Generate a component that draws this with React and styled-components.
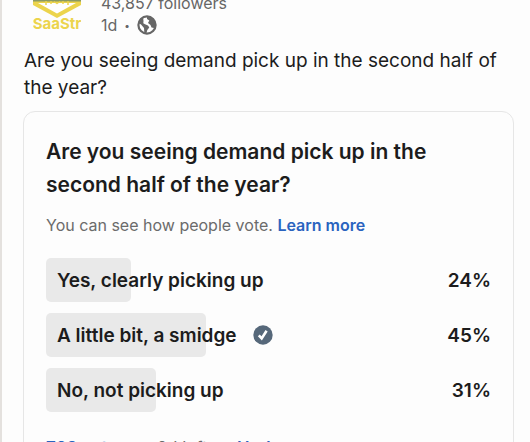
import React from "react";
import styled, { createGlobalStyle } from "styled-components";

const options = [
  { label: "Yes, clearly picking up", percent: 24 },
  { label: "A little bit, a smidge", percent: 45, voted: true },
  { label: "No, not picking up", percent: 31 },
];

const Logo = () => (
  <LogoSvg viewBox="0 0 48 36" aria-label="SaaStr">
    <path d="M0 0H48V5L24 18L0 5Z" fill="#ecd44c" />
    <path d="M5 3H43L24 13.5Z" fill="#fff" />
    <rect width="48" height="1.5" fill="#8b9a63" />
    <path d="M13 1V5M18 1V4M30 1V4M35 1V5" stroke="#ecd44c" strokeWidth="1.5" />
    <path d="M21 1.5L24 4L27 1.5" fill="none" stroke="#ecd44c" />
    <text x="24" y="29" textAnchor="middle">
      SaaStr
    </text>
  </LogoSvg>
);

const Globe = () => (
  <svg width="20" height="20" viewBox="0 0 20 20" aria-hidden="true">
    <circle cx="10" cy="10" r="8.6" fill="#fff" stroke="#666" strokeWidth="2.2" />
    <path d="M1.5 8L3 4L6 2L6.5 6L6.3 8.3L8 9.2L11 10.5L12.3 12.5L10.3 15L9.3 18.5L7.3 17.5L7 13L4 9.5Z" fill="#666" />
    <path d="M10 1.5L15 3L18 7L18.5 11L17 13L14.5 12.5L13.5 10L11 8L12.3 5.5L10 4Z" fill="#666" />
  </svg>
);

const Check = () => (
  <svg width="20" height="20" viewBox="0 0 20 20" aria-label="Your vote">
    <circle cx="10" cy="10" r="9.7" fill="#56687a" />
    <path d="M5.8 10.3L8.7 13.4L13.6 5.8" fill="none" stroke="#fff" strokeWidth="2.6" />
  </svg>
);

const App = () => {
  return (
    <>
      <GlobalStyle />
      <Post>
        <Header>
          <Logo />
          <Meta>
            <span>43,857 followers</span>
            <Age>
              1d <Dot>•</Dot> <Globe />
            </Age>
          </Meta>
        </Header>
        <Commentary>
          Are you seeing demand pick up in the second half of the year?
        </Commentary>
        <Poll>
          <Question>
            Are you seeing demand pick up in the second half of the year?
          </Question>
          <Note>
            You can see how people vote. <Link href="#">Learn more</Link>
          </Note>
          <Options>
            {options.map((option) => (
              <Option key={option.label}>
                <Bar style={{ width: `${option.percent * 0.8}%` }} />
                <Label>
                  {option.label}
                  {option.voted && <Check />}
                </Label>
                <Percent>{option.percent}%</Percent>
              </Option>
            ))}
          </Options>
          <Footer>
            <Link href="#">768 votes</Link>
            <Dot>•</Dot>
            <span>6d left</span>
            <Dot>•</Dot>
            <Link href="#">Undo</Link>
          </Footer>
        </Poll>
      </Post>
    </>
  );
};

export default App;

const GlobalStyle = createGlobalStyle`
  * {
    box-sizing: border-box;
  }

  body {
    margin: 0;
    background: #fdfdfd;
    color: #1c1c1c;
    font-family: Inter, "Liberation Sans", sans-serif;
  }
`;

const Post = styled.article`
  height: 100vh;
  overflow: hidden;
  padding: 0 16px 0 21px;
  border-left: 2px solid #e4e1de;
`;

const Header = styled.header`
  display: flex;
  align-items: flex-end;
  gap: 20px;
  height: 36px;
  padding-left: 10px;
  overflow: hidden;
`;

const LogoSvg = styled.svg`
  width: 48px;
  height: 36px;

  text {
    fill: #ecd44c;
    font-size: 15px;
    font-weight: 700;
  }
`;

const Meta = styled.div`
  display: flex;
  flex-direction: column;
  color: #666;
  font-size: 16px;
  line-height: 22px;
`;

const Age = styled.div`
  display: flex;
  align-items: center;
  gap: 7px;
`;

const Dot = styled.span`
  font-size: 10px;
`;

const Commentary = styled.p`
  margin: 11px 0 10px;
  padding-left: 1px;
  font-size: 19px;
  line-height: 27px;
`;

const Poll = styled.section`
  padding: 23px 22px;
  border: 1px solid #e6e6e6;
  border-radius: 12px;
`;

const Question = styled.h2`
  margin: 0;
  font-size: 21px;
  font-weight: 600;
  line-height: 33px;
`;

const Note = styled.p`
  margin: 12px 0 21px;
  color: #6b6b6b;
  font-size: 16px;
  line-height: 24px;
`;

const Link = styled.a`
  color: #2a63bf;
  font-weight: 600;
  text-decoration: none;
`;

const Options = styled.ul`
  display: flex;
  flex-direction: column;
  gap: 11px;
  margin: 0;
  padding: 0;
  list-style: none;
`;

const Option = styled.li`
  display: grid;
  grid-template-columns: 1fr auto;
  align-items: center;
  height: 44px;
  font-size: 19px;
  font-weight: 600;
`;

const Bar = styled.div`
  grid-area: 1 / 1 / 2 / 3;
  height: 44px;
  border-radius: 5px;
  background: #e9e9e9;
`;

const Label = styled.div`
  display: flex;
  grid-area: 1 / 1;
  align-items: center;
  gap: 16px;
  padding-left: 11px;
`;

const Percent = styled.div`
  grid-area: 1 / 2;
`;

const Footer = styled.div`
  display: flex;
  align-items: center;
  gap: 12px;
  margin-top: 24px;
  color: #6b6b6b;
  font-size: 17px;
  line-height: 24px;
`;
